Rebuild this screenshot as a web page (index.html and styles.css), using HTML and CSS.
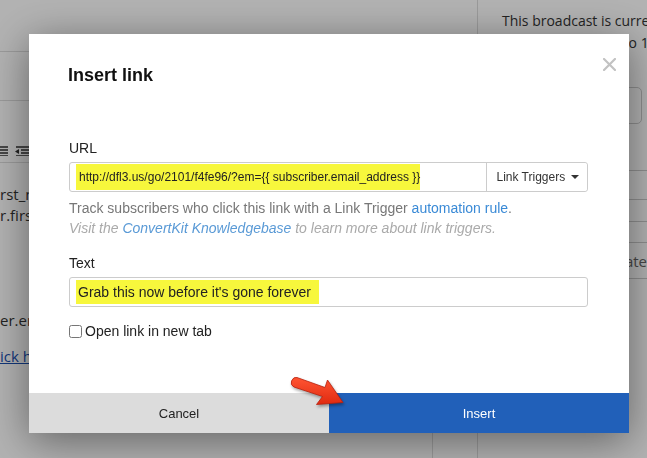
FILE: index.html
```html
<!DOCTYPE html>
<html lang="en">
<head>
    <meta charset="UTF-8">
    <meta name="viewport" content="width=device-width, initial-scale=1.0">
    <title>Insert link</title>
    <link rel="stylesheet" href="styles.css">
</head>
<body>
    <div class="page">
        <div class="editor">
            <div class="editor-top"></div>
            <div class="editor-bar"></div>
            <div class="editor-tools">
                <svg width="8" height="10" viewBox="0 0 8 10"><path d="M0 1H8M0 4H8M0 7H8M0 10H8" stroke="#333" stroke-width="1.6"/></svg>
                <svg width="15" height="10" viewBox="0 0 15 10"><path d="M1 1H15M6 4H15M6 7H15M1 10H15" stroke="#333" stroke-width="1.6"/><path d="M0 5.5L4 3V8Z" fill="#333"/></svg>
            </div>
            <div class="editor-body">
                <p class="line">rst_name</p>
                <p class="line">r.first_na</p>
                <p class="line gap">er.email</p>
                <p class="line"><a href="#">ick here</a></p>
            </div>
            <div class="editor-foot"><div class="foot-cell"></div></div>
        </div>
        <div class="sidebar">
            <p class="side-text">This broadcast is currently scheduled<br>and will be mailed to 1,045 subscribers</p>
            <div class="side-box"></div>
            <div class="side-row r1"></div>
            <div class="side-row r2"></div>
            <div class="side-row r3"></div>
            <div class="side-row r4">Update</div>
            <div class="side-row r5"></div>
        </div>
    </div>

    <div class="overlay"></div>

    <div class="modal">
        <div class="modal-header">
            <h2>Insert link</h2>
            <button type="button" class="close" aria-label="Close">
                <svg width="13" height="13" viewBox="0 0 13 13"><path d="M1 1L12 12M12 1L1 12" stroke="#c2c2c2" stroke-width="2.2" stroke-linecap="square"/></svg>
            </button>
        </div>
        <div class="modal-body">
            <label class="field-label">URL</label>
            <div class="input-group">
                <div class="field url"><span class="hl">http://dfl3.us/go/2101/f4fe96/?em={{ subscriber.email_address }}</span></div>
                <button type="button" class="triggers">Link Triggers <span class="caret"></span></button>
            </div>
            <p class="help track">Track subscribers who click this link with a Link Trigger <a href="#">automation rule</a>.</p>
            <p class="help note">Visit the <a href="#">ConvertKit Knowledgebase</a> to learn more about link triggers.</p>

            <label class="field-label">Text</label>
            <div class="field text"><span class="hl">Grab this now before it's gone forever</span></div>

            <label class="check"><input type="checkbox"><span>Open link in new tab</span></label>
        </div>
        <div class="modal-footer">
            <button type="button" class="btn cancel">Cancel</button>
            <button type="button" class="btn insert">Insert</button>
        </div>
    </div>

    <svg class="arrow" width="64" height="40" viewBox="0 0 64 40">
        <defs>
            <linearGradient id="red" x1="0" y1="0" x2="0" y2="1">
                <stop offset="0" stop-color="#ff5533"/>
                <stop offset="1" stop-color="#e02a10"/>
            </linearGradient>
        </defs>
        <path d="M8 8.5 L36 18.5 L38.5 11 L54 33.5 L27.5 35.5 L33.5 27.5 L5 18 Q1 16 2.5 12 Q4.5 7.5 8 8.5 Z" fill="url(#red)" stroke="#b8200c" stroke-width="0.8"/>
    </svg>
</body>
</html>
```

FILE: styles.css
```css
* {
    box-sizing: border-box;
}
html, body {
    margin: 0;
    padding: 0;
    height: 100%;
    overflow: hidden;
}
body {
    font-family: "Liberation Sans", Arial, sans-serif;
    background-color: #fff;
    color: #333;
}
.page {
    display: flex;
    height: 458px;
}
.editor {
    width: 478px;
    border-right: 1px solid #ddd;
    display: flex;
    flex-direction: column;
}
.editor-top {
    height: 52px;
    border-bottom: 1px solid #ddd;
}
.editor-bar {
    height: 49px;
    border-bottom: 1px solid #ddd;
}
.editor-tools {
    height: 62px;
    padding: 45px 0 0 0;
    border-bottom: 1px solid #ddd;
    display: flex;
    align-items: flex-start;
    gap: 7px;
}
.editor-tools svg {
    display: block;
}
.editor-body {
    flex: 1;
    padding: 21px 0 0 0;
    font-family: "Open Sans", sans-serif;
    font-size: 15px;
}
.line {
    margin: 0;
    line-height: 21px;
    white-space: nowrap;
}
.line.gap {
    margin-top: 84px;
    margin-bottom: 15px;
}
.line a {
    color: #1a4fb0;
}
.editor-foot {
    height: 25px;
    display: flex;
    justify-content: flex-end;
}
.foot-cell {
    width: 45px;
    border-left: 1px solid #ddd;
}
.sidebar {
    flex: 1;
    min-width: 0;
    overflow: hidden;
    padding: 10px 0 0 24px;
    font-family: "Open Sans", sans-serif;
    font-size: 14px;
}
.side-text {
    margin: 0 0 33px;
    line-height: 22px;
    white-space: nowrap;
}
.side-box {
    height: 37px;
    margin: 0 5px 46px 0;
    border: 1px solid #ccc;
    border-radius: 5px;
}
.side-row {
    border-top: 1px solid #ccc;
    color: #666;
    text-align: right;
    white-space: nowrap;
}
.r1 { height: 29px; }
.r2 { height: 22px; }
.r3 { height: 21px; }
.r4 {
    height: 36px;
    line-height: 36px;
    font-size: 15px;
}
.r5 { height: 20px; }
.overlay {
    position: fixed;
    inset: 0;
    background: rgba(0, 0, 0, 0.3);
}
.modal {
    position: fixed;
    left: 29px;
    top: 34px;
    width: 600px;
    height: 399px;
    background-color: #fff;
    box-shadow: 0 8px 40px rgba(0, 0, 0, 0.45);
    display: flex;
    flex-direction: column;
    color: #222;
}
.modal-header {
    padding: 30px 40px 0 39px;
    display: flex;
    justify-content: space-between;
}
.modal-header h2 {
    margin: 0;
    font-size: 18px;
    line-height: 22px;
    font-weight: bold;
    color: #111;
}
.close {
    background: none;
    border: none;
    padding: 0;
    margin: -6px -27px 0 0;
    width: 13px;
    height: 13px;
    cursor: pointer;
}
.close svg {
    display: block;
}
.modal-body {
    flex: 1;
    padding: 52px 41px 0 40px;
    display: flex;
    flex-direction: column;
}
.field-label {
    font-size: 14px;
    line-height: 20px;
    margin-bottom: 4px;
    color: #222;
}
.input-group {
    display: flex;
    height: 30px;
    border: 1px solid #ccc;
    border-radius: 3px;
}
.field {
    height: 30px;
    display: flex;
    align-items: center;
    padding: 0 6px;
    color: #222;
}
.field.url {
    flex: 1;
    height: 28px;
    font-size: 12px;
}
.field.text {
    border: 1px solid #ccc;
    border-radius: 3px;
    font-size: 14px;
}
.hl {
    background-color: #f7f73c;
    padding: 4px 8px 4px 2px;
}
.field.url .hl {
    padding: 6px 0 6px 3px;
}
.triggers {
    width: 101px;
    border: none;
    border-left: 1px solid #ccc;
    background: #fff;
    font-family: inherit;
    font-size: 12px;
    color: #333;
    padding: 0 0 0 1px;
    border-radius: 0 3px 3px 0;
}
.caret {
    display: inline-block;
    margin-left: 2px;
    vertical-align: 2px;
    border-top: 4px solid #333;
    border-left: 4px solid transparent;
    border-right: 4px solid transparent;
}
.help {
    margin: 0;
    font-size: 14px;
    line-height: 20px;
    color: #777;
}
.help.track {
    margin-top: 6px;
}
.help a {
    color: #3a8ad6;
    text-decoration: none;
}
.note {
    font-style: italic;
    color: #aaa;
    margin-bottom: 15px;
}
.note a {
    color: #5a9ad6;
}
.check {
    margin-top: 14px;
    display: flex;
    align-items: center;
    gap: 3px;
    font-size: 14px;
    line-height: 20px;
    color: #222;
}
.check input {
    margin: 0;
    width: 13px;
    height: 13px;
}
.modal-footer {
    display: flex;
    height: 40px;
}
.btn {
    flex: 1;
    border: none;
    font-family: inherit;
    font-size: 13px;
    cursor: pointer;
}
.cancel {
    background-color: #dcdcdc;
    color: #222;
}
.insert {
    background-color: #2160b9;
    color: #fff;
}
.arrow {
    position: fixed;
    left: 289px;
    top: 369px;
    filter: drop-shadow(1px 2px 1.5px rgba(0, 0, 0, 0.35));
}
```
